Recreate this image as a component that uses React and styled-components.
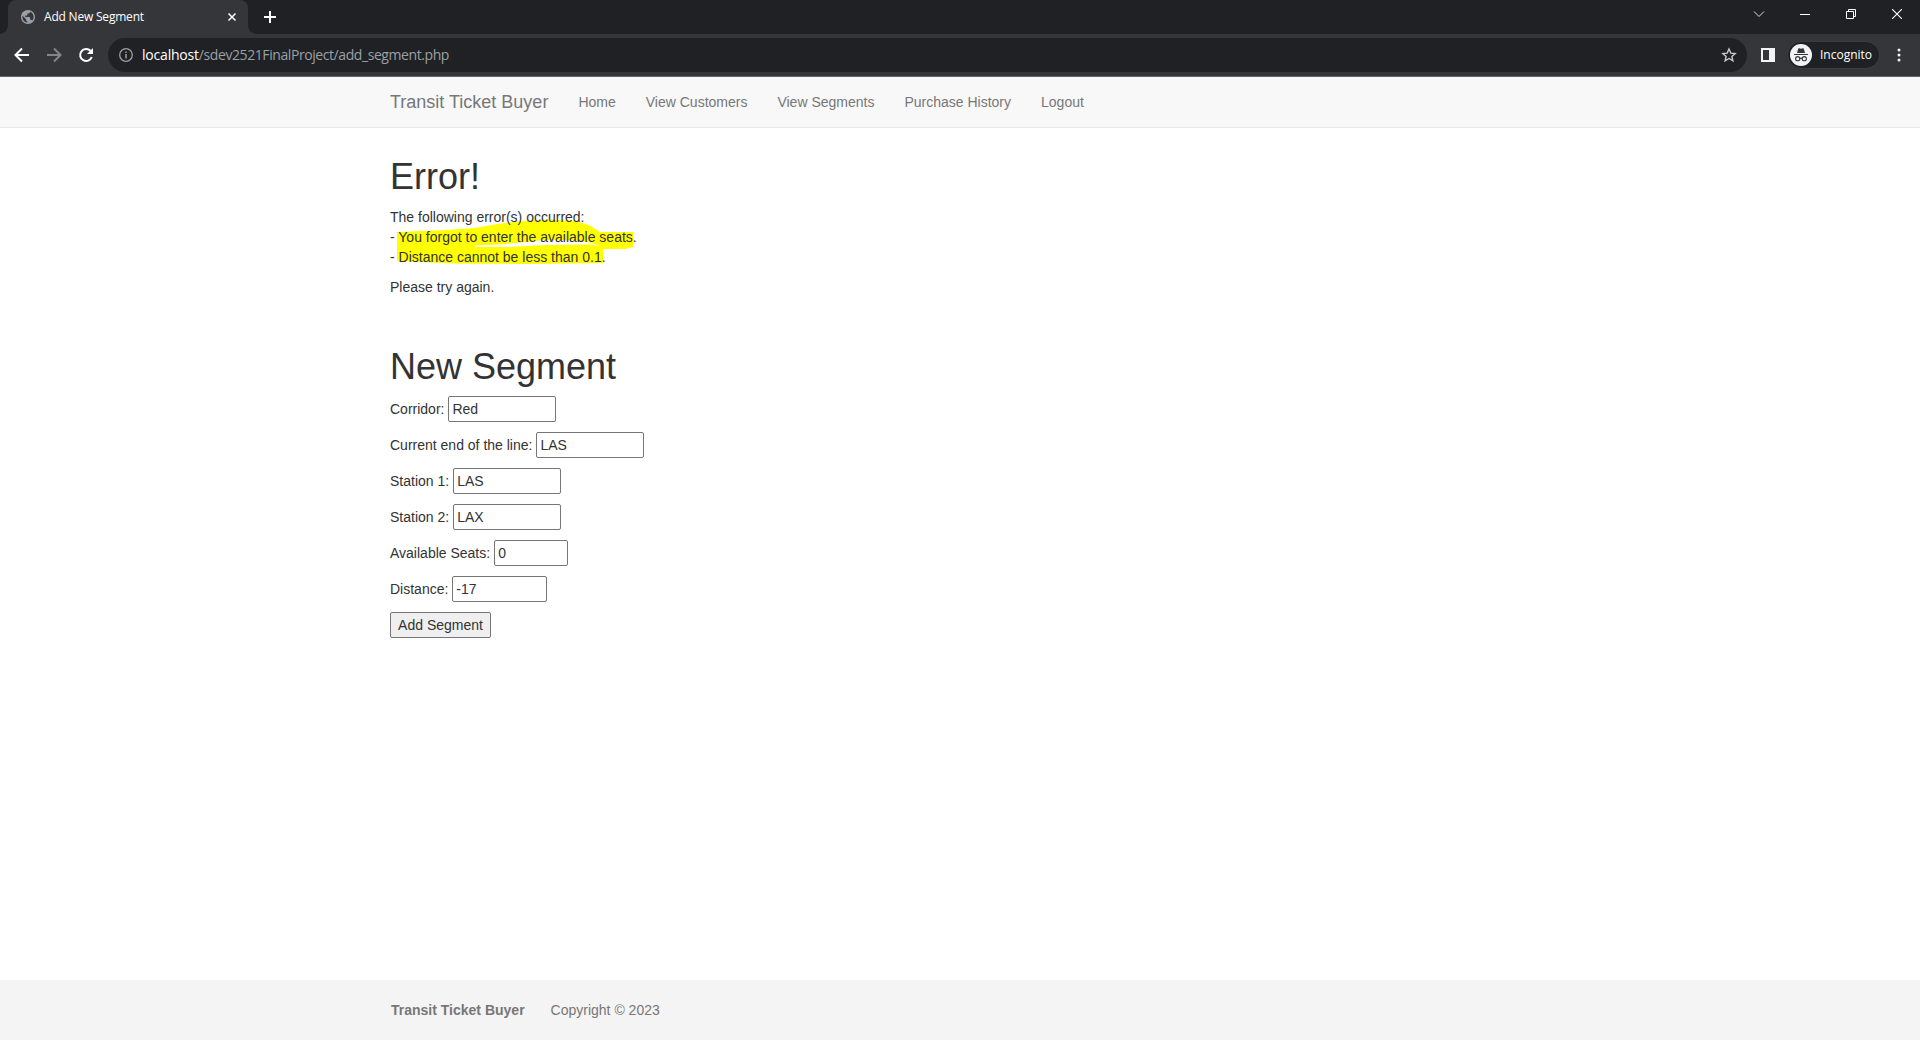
import React from "react";
import styled, { createGlobalStyle } from "styled-components";

const Global = createGlobalStyle`
  * { box-sizing: border-box; }
  html, body { margin: 0; padding: 0; }
  body {
    font-family: "Liberation Sans", Arial, sans-serif;
    font-size: 14px;
    line-height: 20px;
    color: #333;
    background: #fff;
  }
`;

const Window = styled.div`
  display: flex;
  flex-direction: column;
  height: 1040px;
  overflow: hidden;
`;

const Strip = styled.header`
  display: flex;
  height: 34px;
  background: #202124;
  padding-left: 8px;
  font-family: "Open Sans", "Noto Sans", sans-serif;
`;

const Tab = styled.div`
  position: relative;
  display: flex;
  align-items: center;
  width: 240px;
  height: 34px;
  padding: 0 10px 0 13px;
  border-radius: 8px 8px 0 0;
  background: #35363a;
  color: #fff;
  &::before, &::after {
    content: "";
    position: absolute;
    bottom: 0;
    width: 8px;
    height: 8px;
  }
  &::before { left: -8px; background: radial-gradient(circle at 0 0, transparent 7.5px, #35363a 8px); }
  &::after { right: -8px; background: radial-gradient(circle at 100% 0, transparent 7.5px, #35363a 8px); }
`;

const TabTitle = styled.span`
  flex: 1;
  margin-left: 9px;
  font-size: 12px;
  letter-spacing: -0.2px;
  white-space: nowrap;
`;

const NewTab = styled.div`
  display: flex;
  align-items: center;
  margin-left: 15px;
`;

const Controls = styled.div`
  display: flex;
  align-items: flex-start;
  margin-left: auto;
`;

const Control = styled.div`
  display: flex;
  justify-content: center;
  align-items: center;
  width: 46px;
  height: 28px;
`;

const Toolbar = styled.div`
  display: flex;
  align-items: center;
  height: 43px;
  padding: 0 18px 0 13px;
  background: #35363a;
  border-bottom: 1px solid #66646b;
  font-family: "Open Sans", "Noto Sans", sans-serif;
`;

const NavIcons = styled.div`
  display: flex;
  gap: 14px;
  width: 95px;
`;

const Address = styled.div`
  display: flex;
  align-items: center;
  flex: 1;
  height: 34px;
  padding: 0 10px;
  border-radius: 17px;
  background: #202124;
`;

const Url = styled.span`
  flex: 1;
  margin-left: 8px;
  font-size: 14px;
  letter-spacing: -0.42px;
  color: #9aa0a6;
  b { font-weight: 400; color: #fff; letter-spacing: -0.2px; }
`;

const SidePanel = styled.div`
  display: flex;
  margin: 0 12px 0 14px;
`;

const Profile = styled.div`
  display: flex;
  align-items: center;
  width: 93px;
  height: 28px;
  padding-left: 2px;
  border: 1px solid #3c3d41;
  border-radius: 14px;
  background: #202124;
  color: #fff;
  font-size: 12px;
  svg { margin-right: 8px; }
`;

const Menu = styled.div`
  display: flex;
  margin-left: 16px;
`;

const Navbar = styled.nav`
  height: 51px;
  background: #f8f8f8;
  border-bottom: 1px solid #e7e7e7;
`;

const Container = styled.div`
  display: flex;
  align-items: center;
  width: 1170px;
  height: 100%;
  margin: 0 auto;
  padding: 0 15px;
`;

const Brand = styled.span`
  font-size: 18px;
  color: #777;
  margin-right: 30px;
`;

const NavList = styled.div`
  display: flex;
  gap: 30px;
  color: #777;
`;

const Content = styled.main`
  flex: 1;
  width: 1170px;
  margin: 0 auto;
  padding: 29px 15px 0;
`;

const Title = styled.h1`
  margin: 0 0 10px;
  font-size: 36px;
  font-weight: 500;
  line-height: 39.6px;
`;

const Messages = styled.section`
  position: relative;
  margin-bottom: 50px;
`;

const Text = styled.p`
  position: relative;
  margin: 0 0 10px;
`;

const Marker = styled.svg`
  position: absolute;
  left: 0;
  top: 49px;
`;

const Row = styled.div`
  display: flex;
  align-items: center;
  gap: 4px;
  height: 26px;
  margin-bottom: 10px;
`;

const Field = styled.input`
  width: ${(p) => p.$width}px;
  height: 26px;
  margin: 0;
  padding: 1px 3px;
  border: 1px solid #767676;
  border-radius: 2px;
  background: #fff;
  color: #333;
  font: inherit;
`;

const Submit = styled.button`
  width: 101px;
  height: 26px;
  padding: 0;
  border: 1px solid #767676;
  border-radius: 2px;
  background: #efefef;
  color: #333;
  font: inherit;
`;

const Footer = styled.footer`
  height: 60px;
  background: #f4f4f4;
  color: #777;
`;

const FooterBrand = styled.b`
  margin: 0 26px 0 1px;
`;

const links = ["Home", "View Customers", "View Segments", "Purchase History", "Logout"];
const fields = [
  ["Corridor:", "Red", 108],
  ["Current end of the line:", "LAS", 108],
  ["Station 1:", "LAS", 108],
  ["Station 2:", "LAX", 108],
  ["Available Seats:", "0", 74],
  ["Distance:", "-17", 95],
];

const Globe = () => (
  <svg width="14" height="14" viewBox="2 2 20 20">
    <path fill="#9aa0a6" d="M12 2C6.480 2 2 6.480 2 12s4.480 10 10 10 10-4.480 10-10S17.520 2 12 2zm-1 17.930c-3.950-.49-7-3.850-7-7.930 0-.62.08-1.210.21-1.790L9 15v1c0 1.100.9 2 2 2v1.930zm6.900-2.540c-.26-.81-1-1.390-1.900-1.390h-1v-3c0-.55-.45-1-1-1H8v-2h2c.55 0 1-.45 1-1V7h2c1.100 0 2-.9 2-2v-.41c2.930 1.190 5 4.060 5 7.410 0 2.080-.8 3.970-2.100 5.390z" />
  </svg>
);

const Incognito = () => (
  <svg width="22" height="22" viewBox="0 0 22 22">
    <circle cx="11" cy="11" r="11" fill="#f1f3f4" />
    <path d="M7 9 8.200 4.800q.3-.8 1.100-.5l1.700.4 1.700-.4q.8-.3 1.100.5L15 9zM4 10h14v1H4z" fill="#35363a" />
    <g fill="none" stroke="#35363a" strokeWidth="1.100">
      <circle cx="7.700" cy="14.700" r="2.100" />
      <circle cx="14.300" cy="14.700" r="2.100" />
      <path d="M9.800 14.500q1.200-.7 2.400 0" />
    </g>
  </svg>
);

export default function App() {
  return (
    <Window>
      <Global />
      <Strip>
        <Tab>
          <Globe />
          <TabTitle>Add New Segment</TabTitle>
          <svg width="12" height="12" viewBox="0 0 12 12"><path d="m2.500 2.500 7 7m0-7-7 7" stroke="#fff" strokeWidth="1.500" /></svg>
        </Tab>
        <NewTab>
          <svg width="14" height="14" viewBox="0 0 14 14"><path d="M7 1v12M1 7h12" stroke="#fff" strokeWidth="2" /></svg>
        </NewTab>
        <Controls>
          <Control><svg width="12" height="12" viewBox="0 0 12 12"><path d="m1 3.500 5 5 5-5" fill="none" stroke="#ddd" /></svg></Control>
          <Control><svg width="10" height="10" viewBox="0 0 10 10"><path d="M0 5.500h10" stroke="#fff" /></svg></Control>
          <Control><svg width="10" height="10" viewBox="0 0 10 10"><path d="M.5 2.500h7v7h-7zM2.500 2.500v-2h7v7h-2" fill="none" stroke="#fff" /></svg></Control>
          <Control><svg width="10" height="10" viewBox="0 0 10 10"><path d="m0 0 10 10M10 0 0 10" stroke="#fff" strokeWidth="1.100" /></svg></Control>
        </Controls>
      </Strip>
      <Toolbar>
        <NavIcons>
          <svg width="18" height="18" viewBox="0 0 18 18"><path d="M16 9H3.500M9 2.500 2.500 9 9 15.500" fill="none" stroke="#fff" strokeWidth="2" /></svg>
          <svg width="18" height="18" viewBox="0 0 18 18"><path d="M2 9h12.500M9 2.500 15.500 9 9 15.500" fill="none" stroke="#85868a" strokeWidth="2" /></svg>
          <svg width="18" height="18" viewBox="0 0 18 18"><path d="M14.800 11A6 6 0 1 1 13.500 4.800L15 6.300" fill="none" stroke="#fff" strokeWidth="2" /><path d="M16 2v6h-6z" fill="#fff" /></svg>
        </NavIcons>
        <Address>
          <svg width="16" height="16" viewBox="0 0 16 16"><circle cx="8" cy="8" r="6.300" fill="none" stroke="#9aa0a6" strokeWidth="1.300" /><path d="M8 7v4.500M8 4.500V6" stroke="#9aa0a6" strokeWidth="1.500" /></svg>
          <Url><b>localhost</b>/sdev2521FinalProject/add_segment.php</Url>
          <svg width="16" height="16" viewBox="0 0 16 16"><path d="m8 2 1.800 4.100 4.400.4-3.300 3 1 4.300L8 11.500l-3.900 2.300 1-4.300-3.300-3 4.400-.4z" fill="none" stroke="#c7cacd" strokeWidth="1.400" /></svg>
        </Address>
        <SidePanel><svg width="14" height="14" viewBox="0 0 14 14"><path d="M0 0h14v14H0zM2 2v10h6V2z" fill="#f1f3f4" fillRule="evenodd" /></svg></SidePanel>
        <Profile><Incognito />Incognito</Profile>
        <Menu><svg width="6" height="16" viewBox="0 0 6 16" fill="#f1f3f4"><circle cx="3" cy="3" r="1.500" /><circle cx="3" cy="8" r="1.500" /><circle cx="3" cy="13" r="1.500" /></svg></Menu>
      </Toolbar>
      <Navbar>
        <Container>
          <Brand>Transit Ticket Buyer</Brand>
          <NavList>{links.map((l) => <span key={l}>{l}</span>)}</NavList>
        </Container>
      </Navbar>
      <Content>
        <Messages>
          <Title>Error!</Title>
          <Marker width="260" height="64" viewBox="390 206 260 64" fill="#ff0">
            <path d="M397 232 447 230 475 228 497 224 522 221 550 219.500 575 221 589 225 600 232H633V247L625 249H603V263L530 264 455 263.500 397 261V232ZM475 245.500V247L510 247 545 245 590 244.500 600 246 590 242.500 570 240 543 240 527 242 500 244.500Z" fillRule="evenodd" />
          </Marker>
          <Text>
            The following error(s) occurred:<br />
            - You forgot to enter the available seats.<br />
            - Distance cannot be less than 0.1.
          </Text>
          <Text>Please try again.</Text>
        </Messages>
        <Title>New Segment</Title>
        {fields.map(([label, value, width]) => (
          <Row key={label}>
            <span>{label}</span>
            <Field $width={width} defaultValue={value} />
          </Row>
        ))}
        <Submit>Add Segment</Submit>
      </Content>
      <Footer>
        <Container>
          <FooterBrand>Transit Ticket Buyer</FooterBrand>
          <span>Copyright © 2023</span>
        </Container>
      </Footer>
    </Window>
  );
}
